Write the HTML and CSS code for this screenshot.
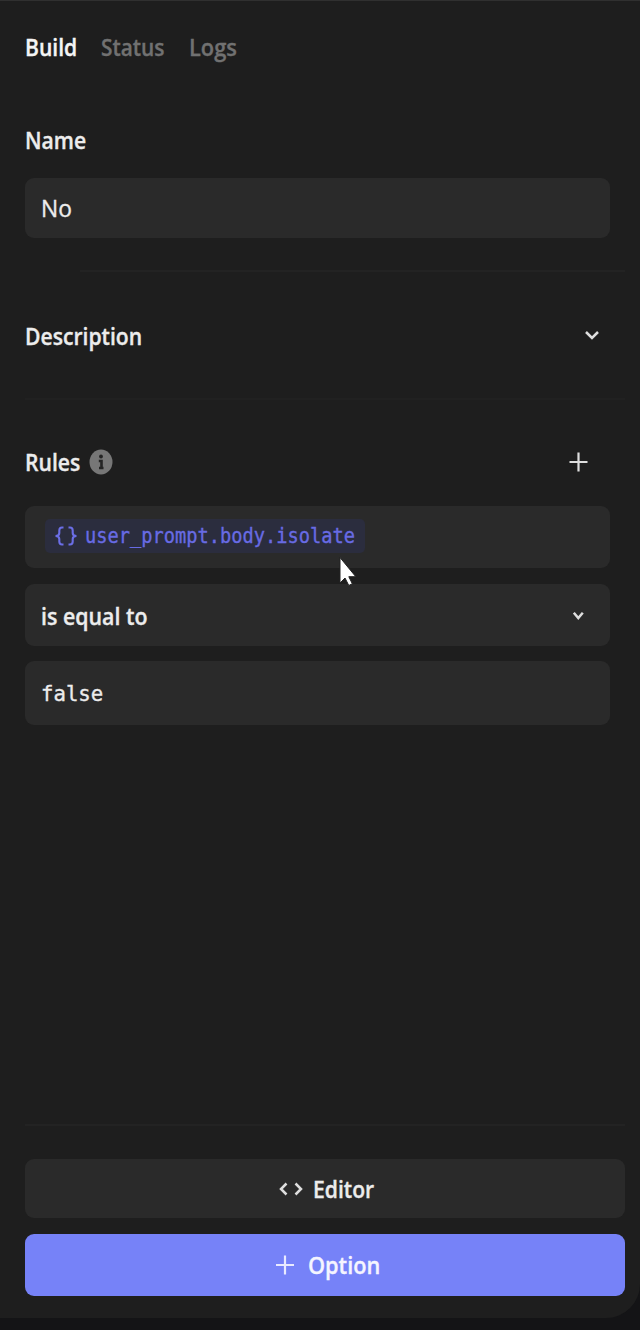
FILE: index.html
```html
<!DOCTYPE html>
<html lang="en">
<head>
<meta charset="utf-8">
<title>Build</title>
<link rel="stylesheet" href="styles.css">
</head>
<body>
<main class="panel">
  <nav class="tabs">
    <a class="tab active"><span class="text build">Build</span></a>
    <a class="tab"><span class="text status">Status</span></a>
    <a class="tab"><span class="text logs">Logs</span></a>
  </nav>
  <section class="name">
    <h2 class="heading"><span class="text name-label">Name</span></h2>
    <div class="field"><span class="text value">No</span></div>
  </section>
  <hr class="rule first">
  <section class="description">
    <h2 class="heading"><span class="text desc-label">Description</span></h2>
    <svg class="icon chevron" width="16" height="12" viewBox="0 0 16 12"><path d="M2 3 8 9 14 3"/></svg>
  </section>
  <hr class="rule second">
  <section class="rules">
    <header class="rules-head">
      <h2 class="heading rules-title"><span class="text rules-label">Rules</span></h2>
      <svg class="info" width="24" height="26" viewBox="0 0 24 26"><ellipse cx="12" cy="13" rx="11.500" ry="12.500"/><circle cx="12" cy="7.500" r="1.900"/><path d="M9.800 12h2.700v7.500M10 19h4.500"/></svg>
      <svg class="icon plus" width="20" height="22" viewBox="0 0 20 22"><path d="M10.500 1.500v19M1.500 11h18"/></svg>
    </header>
    <div class="field variable">
      <span class="chip">
        <svg class="braces" width="24" height="20" viewBox="0 0 24 20"><path d="M9.500 1.500H8Q5.300 1.500 5.300 4.500V7Q5.300 10 1.500 10Q5.300 10 5.300 13V15.500Q5.300 18.500 8 18.500H9.500M14.500 1.500H16Q18.700 1.500 18.700 4.500V7Q18.700 10 22.500 10Q18.700 10 18.700 13V15.500Q18.700 18.500 16 18.500H14.500"/></svg>
        <code class="text path">user_prompt.body.isolate</code>
      </span>
      <svg class="cursor" width="20" height="32" viewBox="0 0 20 32"><path d="M1 1.500v25.500l5-5 3.800 7.500 3.500-1.800-3.500-7h7z"/></svg>
    </div>
    <div class="field select">
      <span class="text operator">is equal to</span>
      <svg class="icon small" width="12" height="10" viewBox="0 0 12 10"><path d="M1.800 1.800 6.300 7 10.800 1.800"/></svg>
    </div>
    <div class="field literal"><code class="text bool">false</code></div>
  </section>
  <footer class="actions">
    <hr class="rule">
    <button class="button editor">
      <svg class="icon" width="26" height="18" viewBox="0 0 26 18"><path d="M8.500 3.500 3 9 8.500 14.500M17.500 3.500 23 9l-5.500 5.500"/></svg>
      <span class="text editor-label">Editor</span>
    </button>
    <button class="button option">
      <svg class="icon plus" width="20" height="22" viewBox="0 0 20 22"><path d="M10 1.500v19M1 11h18"/></svg>
      <span class="text option-label">Option</span>
    </button>
  </footer>
</main>
</body>
</html>
```
FILE: styles.css
```css
* { box-sizing: border-box; }
body { margin: 0; background: #141416; color: #ececec; font: 600 24px/32px "Open Sans", "Noto Sans", sans-serif; }
.panel { display: flex; flex-direction: column; height: 1318px; padding: 30px 15px 22px 25px; background: #1e1e1e; border-top: 1px solid #303030; border-bottom-right-radius: 34px; }
.text { display: inline-block; white-space: nowrap; transform-origin: left center; transform: scaleX(.88); -webkit-text-stroke: .35px currentColor; }
.tabs { display: grid; grid-template-columns: 76px 88px 80px; height: 32px; color: #717171; }
.active { color: #f5f5f5; }
.heading { margin: 0; font-size: 24px; font-weight: 600; line-height: 32px; }
.name { margin-top: 61px; }
.field { display: flex; align-items: center; width: 585px; height: 62px; padding: 0 16px; background: #2a2a2a; border-radius: 9px; }
.name .field { height: 60px; margin-top: 22px; font-weight: 400; }
.rule { width: 600px; height: 2px; margin: 0; border: 0; background: #232323; }
.first { width: 545px; margin-top: 32px; margin-left: 55px; }
.second { background: #212121; }
.description { display: flex; align-items: center; justify-content: space-between; width: 575px; height: 126px; padding-top: 2px; }
.chevron { margin-bottom: 3px; }
.icon { flex: none; fill: none; stroke: #dedede; stroke-width: 2.5; }
.rules { margin-top: 46px; }
.rules-head { display: flex; align-items: center; width: 563px; height: 32px; margin-bottom: 28px; }
.rules-title { width: 64px; }
.info { fill: #777; }
.info circle { fill: #242424; }
.info path { fill: none; stroke: #242424; stroke-width: 2.6; }
.plus { margin-left: auto; stroke-width: 2.2; }
.variable { position: relative; padding-left: 20px; }
.chip { display: flex; align-items: center; width: 320px; height: 34px; margin-bottom: 2px; padding-left: 9px; gap: 7px; background: #2b2d3e; border-radius: 5px; }
.braces { flex: none; fill: none; stroke: #6b6ee6; stroke-width: 2.1; }
code { font-family: "DejaVu Sans Mono", monospace; font-weight: 400; }
.path { color: #686be4; font-size: 21px; transform: scaleX(.89); }
.cursor { position: absolute; left: 314px; top: 50px; fill: #fff; stroke: #222; stroke-width: 1; }
.select { justify-content: space-between; margin-top: 16px; padding-top: 2px; padding-right: 26px; }
.literal { margin-top: 15px; height: 64px; padding-top: 2px; }
.bool { font-size: 22px; transform: scaleX(.94); }
.status { transform: scaleX(.87); }
.logs { transform: scaleX(.91); }
.value { transform: scaleX(.95); }
.operator { transform: scaleX(.89); }
.option-label { transform: scaleX(.905); }
.actions { width: 600px; margin-top: auto; }
.button { display: flex; align-items: center; width: 600px; height: 59px; padding: 0; border: 0; border-radius: 9px; background: #2a2a2a; color: #ececec; font: inherit; }
.editor { margin-top: 33px; padding-left: 253px; gap: 9px; }
.option { height: 62px; margin-top: 16px; padding-left: 250px; gap: 13px; background: #7682f8; color: #f5f5ff; }
.option .icon { margin-left: 0; stroke: #e9eaff; }
```
